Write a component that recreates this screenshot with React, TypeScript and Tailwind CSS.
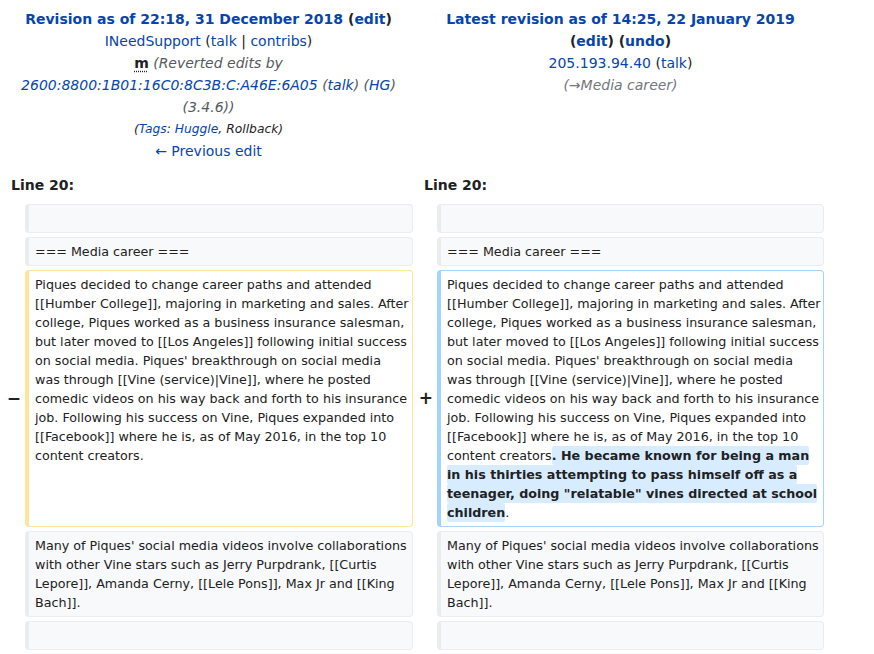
const ctxBox = 'rounded-[4px] border border-l-4 border-[#eaecf0] bg-[#f8f9fa] pl-[6px] pr-[2px] py-[4px]';
const body = ' text-[12.7px] leading-[19px]';

const pique = [
  'Piques decided to change career paths and attended',
  '[[Humber College]], majoring in marketing and sales. After',
  'college, Piques worked as a business insurance salesman,',
  'but later moved to [[Los Angeles]] following initial success',
  "on social media. Piques' breakthrough on social media",
  'was through [[Vine (service)|Vine]], where he posted',
  'comedic videos on his way back and forth to his insurance',
  'job. Following his success on Vine, Piques expanded into',
  '[[Facebook]] where he is, as of May 2016, in the top 10',
];

const many = [
  "Many of Piques' social media videos involve collaborations",
  'with other Vine stars such as Jerry Purpdrank, [[Curtis',
  'Lepore]], Amanda Cerny, [[Lele Pons]], Max Jr and [[King',
  'Bach]].',
];

function A({ children, className = '' }: { children: React.ReactNode; className?: string }) {
  return <a href="#" className={'text-[#0645ad] ' + className}>{children}</a>;
}

function Lines({ lines }: { lines: string[] }) {
  return (
    <>
      {lines.map((l, i) => (
        <div key={i} className="whitespace-nowrap">{l}</div>
      ))}
    </>
  );
}

function Empty() {
  return <div className={ctxBox + ' h-[29px]'}></div>;
}

export default function App() {
  return (
    <div className="min-h-screen bg-white text-[#202122]" style={{ fontFamily: '"DejaVu Sans", sans-serif' }}>
      <div className="ml-1 grid grid-cols-[17px_388px_16px_387px] gap-1 pt-[8px]">
        {/* old revision header */}
        <div className="col-span-2 text-center text-[14px] leading-[22px]">
          <div className="font-bold">
            <A>Revision as of 22:18, 31 December 2018</A> (<A>edit</A>)
          </div>
          <div>
            <A>INeedSupport</A> (<A>talk</A> | <A>contribs</A>)
          </div>
          <div className="px-[12px]">
            <abbr className="font-bold underline decoration-dotted underline-offset-[3px]" title="This is a minor edit">m</abbr>{' '}
            <span className="italic text-[#54595d]">
              (Reverted edits by <A>2600:8800:1B01:16C0:8C3B:C:A46E:6A05</A> (<A>talk</A>) (<A>HG</A>) (3.4.6))
            </span>
          </div>
          <div className="text-[12.3px] italic text-[#202122]">
            (<A>Tags</A>: <A>Huggle</A>, Rollback)
          </div>
          <div>
            <A>← Previous edit</A>
          </div>
        </div>

        {/* new revision header */}
        <div className="col-span-2 text-center text-[14px] leading-[22px]">
          <div className="font-bold">
            <A>Latest revision as of 14:25, 22 January 2019</A>
          </div>
          <div className="font-bold">
            (<A>edit</A>) (<A>undo</A>)
          </div>
          <div>
            <A>205.193.94.40</A> (<A>talk</A>)
          </div>
          <div className="italic text-[#72777d]">(→Media career)</div>
        </div>

        <div className="col-span-2 pl-[7px] pt-[8px] pb-[4px] text-[14px] font-bold leading-[22px]">Line 20:</div>
        <div className="col-span-2 pl-[7px] pt-[8px] pb-[4px] text-[14px] font-bold leading-[22px]">Line 20:</div>

        {/* diff rows */}
        <div></div>
        <Empty />
        <div></div>
        <Empty />

        <div></div>
        <div className={ctxBox + body}>=== Media career ===</div>
        <div></div>
        <div className={ctxBox + body}>=== Media career ===</div>

        <div className="flex items-center justify-end text-[17px] font-bold">−</div>
        <div className={'rounded-[4px] border border-l-4 border-[#ffe49c] bg-white pl-[6px] pr-[2px] py-[4px]' + body}>
          <Lines lines={pique} />
          <div>content creators.</div>
        </div>
        <div className="flex items-center justify-end text-[17px] font-bold">+</div>
        <div className={'rounded-[4px] border border-l-4 border-[#a3d3ff] bg-white pl-[6px] pr-[2px] py-[4px]' + body}>
          <Lines lines={pique} />
          <div className="whitespace-nowrap">
            content creators
            <span className="rounded-[2px] bg-[#d8ecff] py-[2px] font-bold">. He became known for being a man</span>
          </div>
          <div className="whitespace-nowrap">
            <span className="rounded-[2px] bg-[#d8ecff] py-[2px] font-bold">in his thirties attempting to pass himself off as a</span>
          </div>
          <div className="whitespace-nowrap">
            <span className="rounded-[2px] bg-[#d8ecff] py-[2px] font-bold">teenager, doing "relatable" vines directed at school</span>
          </div>
          <div className="whitespace-nowrap">
            <span className="rounded-[2px] bg-[#d8ecff] py-[2px] font-bold">children</span>.
          </div>
        </div>

        <div></div>
        <div className={ctxBox + body}>
          <Lines lines={many} />
        </div>
        <div></div>
        <div className={ctxBox + body}>
          <Lines lines={many} />
        </div>

        <div></div>
        <Empty />
        <div></div>
        <Empty />
      </div>
    </div>
  );
}
